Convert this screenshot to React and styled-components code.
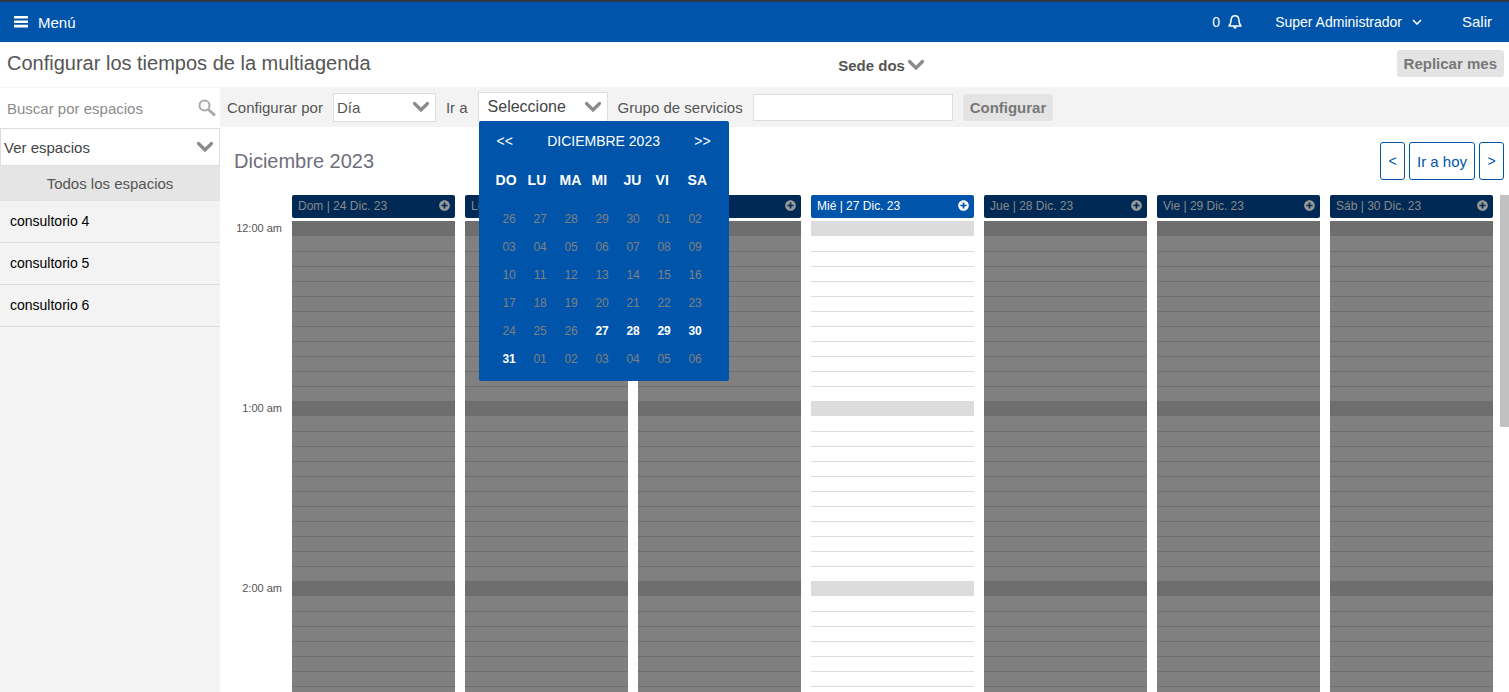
import { useState } from 'react';
import styled, { createGlobalStyle } from 'styled-components';
import { FaPlusCircle } from 'react-icons/fa';

const weekDays = ['DO', 'LU', 'MA', 'MI', 'JU', 'VI', 'SA'];

const monthDays = [
  '26', '27', '28', '29', '30', '01', '02',
  '03', '04', '05', '06', '07', '08', '09',
  '10', '11', '12', '13', '14', '15', '16',
  '17', '18', '19', '20', '21', '22', '23',
  '24', '25', '26', '27', '28', '29', '30',
  '31', '01', '02', '03', '04', '05', '06',
];

const firstAvailable = 31;
const lastAvailable = 35;

const agenda = [
  { label: 'Dom | 24 Dic. 23' },
  { label: 'Lun | 25 Dic. 23' },
  { label: 'Mar | 26 Dic. 23' },
  { label: 'Mié | 27 Dic. 23', active: true },
  { label: 'Jue | 28 Dic. 23' },
  { label: 'Vie | 29 Dic. 23' },
  { label: 'Sáb | 30 Dic. 23' },
];

const hours = ['12:00 am', '1:00 am', '2:00 am'];
const slots = Array.from({ length: 12 }, (_, i) => i);
const spaces = ['consultorio 4', 'consultorio 5', 'consultorio 6'];

const Arrow = () => (
  <ArrowIcon viewBox='0 0 18 12' aria-hidden='true'>
    <path d='M2.5 2.5 L9 9 L15.5 2.5' />
  </ArrowIcon>
);

const App = () => {
  const [search, setSearch] = useState('');
  const [group, setGroup] = useState('');

  return (
    <Page>
      <GlobalStyle />
      <TopBar>
        <MenuButton type='button'>
          <MenuIcon viewBox='0 0 14 12' aria-hidden='true'>
            <path d='M0 0h14v2.6H0z M0 4.4h14V7H0z M0 8.8h14v2.6H0z' />
          </MenuIcon>
          Menú
        </MenuButton>
        <TopActions>
          <Notifications type='button' aria-label='Notificaciones'>
            0
            <BellIcon viewBox='0 0 16 16' aria-hidden='true'>
              <path d='M8 1.8 C5.6 1.8 4.4 3.4 4.2 5.6 C4 8.8 3.4 10.3 2 12 H14 C12.6 10.3 12 8.8 11.8 5.6 C11.6 3.4 10.4 1.8 8 1.8 Z' />
              <path className='clapper' d='M6.2 12.6 H9.8 C9.8 15.4 6.2 15.4 6.2 12.6 Z' />
            </BellIcon>
          </Notifications>
          <UserButton type='button'>
            Super Administrador
            <SmallArrow viewBox='0 0 10 6' aria-hidden='true'>
              <path d='M1 1 L5 5 L9 1' />
            </SmallArrow>
          </UserButton>
          <ExitLink href='#salir'>Salir</ExitLink>
        </TopActions>
      </TopBar>

      <TitleBar>
        <Title>Configurar los tiempos de la multiagenda</Title>
        <SiteButton type='button'>
          Sede dos
          <Arrow />
        </SiteButton>
        <GrayButton type='button'>Replicar mes</GrayButton>
      </TitleBar>

      <Body>
        <Sidebar>
          <SearchBox>
            <input
              type='text'
              aria-label='Buscar por espacios'
              placeholder='Buscar por espacios'
              value={search}
              onChange={(e) => setSearch(e.target.value)}
            />
            <SearchIcon viewBox='0 0 18 18' aria-hidden='true'>
              <circle cx='6.5' cy='6.5' r='5' />
              <path d='M10.2 10.2 L12 12' />
              <path className='handle' d='M12 12 L16 15.6' />
            </SearchIcon>
          </SearchBox>
          <SpacesSelect>
            <select aria-label='Ver espacios'>
              <option>Ver espacios</option>
            </select>
            <Arrow />
          </SpacesSelect>
          <AllSpaces type='button'>Todos los espacios</AllSpaces>
          <SpaceList>
            {spaces.map((space) => <li key={space}>{space}</li>)}
          </SpaceList>
        </Sidebar>

        <Content>
          <Toolbar>
            <label htmlFor='mode'>Configurar por</label>
            <ModeSelect>
              <select id='mode'>
                <option>Día</option>
              </select>
              <Arrow />
            </ModeSelect>
            <span>Ir a</span>
            <DatePicker>
              <DateButton type='button' aria-expanded='true'>
                Seleccione
                <Arrow />
              </DateButton>
              <Calendar>
                <CalendarHeader>
                  <button type='button' aria-label='Mes anterior'>&lt;&lt;</button>
                  <span>DICIEMBRE 2023</span>
                  <button type='button' aria-label='Mes siguiente'>&gt;&gt;</button>
                </CalendarHeader>
                <WeekDays>
                  {weekDays.map((day) => <span key={day}>{day}</span>)}
                </WeekDays>
                <MonthDays>
                  {monthDays.map((day, i) => (
                    <DayButton
                      key={i}
                      type='button'
                      disabled={i < firstAvailable || i > lastAvailable}
                    >
                      {day}
                    </DayButton>
                  ))}
                </MonthDays>
              </Calendar>
            </DatePicker>
            <label htmlFor='group'>Grupo de servicios</label>
            <GroupInput
              id='group'
              type='text'
              value={group}
              onChange={(e) => setGroup(e.target.value)}
            />
            <GrayButton type='button'>Configurar</GrayButton>
          </Toolbar>

          <MonthBar>
            <MonthTitle>Diciembre 2023</MonthTitle>
            <MonthNav>
              <NavButton type='button' aria-label='Semana anterior'>&lt;</NavButton>
              <NavButton type='button' $large>Ir a hoy</NavButton>
              <NavButton type='button' aria-label='Semana siguiente'>&gt;</NavButton>
            </MonthNav>
          </MonthBar>

          <Agenda>
            <Hours>
              {hours.map((hour) => <Hour key={hour}>{hour}</Hour>)}
            </Hours>
            {agenda.map((day) => (
              <DayColumn key={day.label}>
                <DayHeader $active={day.active}>
                  {day.label}
                  <button type='button' aria-label={`Agregar ${day.label}`}>
                    <FaPlusCircle size={11} />
                  </button>
                </DayHeader>
                {hours.map((hour) => (
                  <HourBlock key={hour}>
                    {slots.map((slot) => <Slot key={slot} $active={day.active} />)}
                  </HourBlock>
                ))}
              </DayColumn>
            ))}
            <ScrollThumb />
          </Agenda>
        </Content>
      </Body>
    </Page>
  );
};

const GlobalStyle = createGlobalStyle`
  *{
    box-sizing: border-box;
  }

  body{
    margin: 0;
    background-color: #fff;
    color: #555;
    font-family: "Liberation Sans", Arial, sans-serif;
    font-size: 15px;
    overflow: hidden;
  }

  button, input, select{
    margin: 0;
    padding: 0;
    border: none;
    background: none;
    color: inherit;
    font: inherit;
  }

  button{
    cursor: pointer;
  }

  svg{
    flex-shrink: 0;
  }
`;

const Page = styled.div`
  height: 100vh;
  display: flex;
  flex-direction: column;
`;

const TopBar = styled.header`
  height: 42px;
  flex-shrink: 0;
  padding: 0 17px 0 14px;
  border-top: 2px solid #2f3645;
  background-color: #0055ab;
  color: #fff;
  display: flex;
  align-items: center;
  justify-content: space-between;
`;

const MenuButton = styled.button`
  display: flex;
  align-items: center;
  gap: 10px;
`;

const MenuIcon = styled.svg`
  width: 14px;
  height: 12px;
  fill: #fff;
`;

const TopActions = styled.div`
  padding-bottom: 1px;
  display: flex;
  align-items: center;
`;

const Notifications = styled.button`
  display: flex;
  align-items: center;
  gap: 7px;
  margin-right: 32px;
  font-size: 14px;
`;

const BellIcon = styled.svg`
  width: 16px;
  height: 16px;
  fill: none;
  stroke: #fff;
  stroke-width: 1.5;
  stroke-linejoin: round;

  .clapper{
    fill: #fff;
    stroke: none;
  }
`;

const UserButton = styled.button`
  display: flex;
  align-items: center;
  gap: 10px;
  margin-right: 40px;
  font-size: 14px;
`;

const SmallArrow = styled.svg`
  width: 10px;
  height: 6px;
  fill: none;
  stroke: #fff;
  stroke-width: 1.6;
`;

const ExitLink = styled.a`
  color: #fff;
  text-decoration: none;
`;

const ArrowIcon = styled.svg`
  width: 18px;
  height: 12px;
  fill: none;
  stroke: #8a8a8a;
  stroke-width: 3.2;
  stroke-linecap: round;
`;

const TitleBar = styled.div`
  height: 45px;
  flex-shrink: 0;
  padding: 0 5px 3px 7px;
  display: flex;
  align-items: center;
  justify-content: space-between;
`;

const Title = styled.h1`
  margin: 0;
  font-size: 20px;
  font-weight: 400;
  white-space: nowrap;
`;

const SiteButton = styled.button`
  padding: 4px 4px 0 0;
  display: flex;
  align-items: center;
  gap: 2px;
  font-weight: 700;
`;

const GrayButton = styled.button`
  height: 27px;
  padding: 0 7px;
  border-radius: 3px;
  background-color: #e4e4e4;
  color: #777;
  font-weight: 700;
  white-space: nowrap;
`;

const Body = styled.div`
  flex: 1;
  min-height: 0;
  display: flex;
`;

const Sidebar = styled.aside`
  width: 220px;
  flex-shrink: 0;
  background-color: #f3f3f3;
`;

const SearchBox = styled.div`
  height: 41px;
  padding: 0 4px 0 7px;
  border-top: 1px solid #f3f3f3;
  background-color: #fff;
  display: flex;
  align-items: center;

  input{
    flex: 1;
    min-width: 0;
    outline: none;
  }

  input::placeholder{
    color: #8c8c8c;
  }
`;

const SearchIcon = styled.svg`
  width: 18px;
  height: 18px;
  fill: none;
  stroke: #aaa;
  stroke-width: 2;

  .handle{
    stroke-width: 3;
    stroke-linecap: round;
  }
`;

const SelectBox = styled.div`
  position: relative;
  border: 1px solid #ddd;
  background-color: #fff;

  select{
    width: 100%;
    height: 100%;
    padding: 0 3px;
    appearance: none;
    outline: none;
  }

  svg{
    position: absolute;
    top: calc(50% - 6px);
    right: 5px;
    pointer-events: none;
  }
`;

const SpacesSelect = styled(SelectBox)`
  height: 38px;
  color: #444;
`;

const ModeSelect = styled(SelectBox)`
  width: 103px;
  height: 29px;
`;

const AllSpaces = styled.button`
  width: 100%;
  height: 35px;
  background-color: #e5e5e5;
`;

const SpaceList = styled.ul`
  margin: 0;
  padding: 0;
  list-style: none;
  color: #000;
  font-size: 14px;

  li{
    padding: 0 10px;
    border-bottom: 1px solid #ddd;
    line-height: 41px;
  }
`;

const Content = styled.main`
  flex: 1;
  min-width: 0;
  display: flex;
  flex-direction: column;
`;

const Toolbar = styled.div`
  height: 40px;
  flex-shrink: 0;
  padding: 0 7px;
  background-color: #f3f3f3;
  display: flex;
  align-items: center;
  gap: 10px;
  white-space: nowrap;
`;

const DatePicker = styled.div`
  position: relative;
`;

const DateButton = styled.button`
  width: 130px;
  height: 30px;
  padding: 0 5px 0 9px;
  border: 1px solid #ddd;
  background-color: #fff;
  color: #444;
  font-size: 16px;
  display: flex;
  align-items: center;
  justify-content: space-between;
`;

const Calendar = styled.div`
  position: absolute;
  top: 29px;
  left: 1px;
  z-index: 1;
  width: 250px;
  height: 260px;
  border-radius: 2px;
  background-color: #0055ab;
  color: #fff;
  font-size: 14px;
`;

const CalendarHeader = styled.div`
  height: 40px;
  padding: 0 18px;
  display: flex;
  align-items: center;
  justify-content: space-between;
`;

const WeekDays = styled.div`
  height: 38px;
  padding-left: 17px;
  display: grid;
  grid-template-columns: repeat(7, 32px);
  align-items: center;
  font-weight: 700;
`;

const MonthDays = styled.div`
  padding: 6px 15px;
  display: grid;
  grid-template-columns: repeat(7, 31px);
  grid-auto-rows: 28px;
`;

const DayButton = styled.button`
  font-size: 12px;
  font-weight: 700;

  &:disabled{
    color: #808080;
    font-weight: 400;
    cursor: default;
  }
`;

const GroupInput = styled.input`
  width: 200px;
  height: 27px;
  padding: 0 5px;
  border: 1px solid #ddd;
  background-color: #fff;
`;

const MonthBar = styled.div`
  height: 68px;
  flex-shrink: 0;
  padding: 0 5px 0 14px;
  display: flex;
  align-items: center;
  justify-content: space-between;
`;

const MonthTitle = styled.h2`
  margin: 0;
  color: #6f6f7b;
  font-size: 20px;
  font-weight: 400;
`;

const MonthNav = styled.div`
  display: flex;
  gap: 4px;
`;

const NavButton = styled.button`
  width: ${({ $large }) => ($large ? '66px' : '25px')};
  height: 38px;
  border: 1px solid #0055ab;
  border-radius: 3px;
  color: #0055ab;
  font-size: ${({ $large }) => ($large ? '15px' : '14px')};
`;

const Agenda = styled.div`
  position: relative;
  flex: 1;
  min-height: 0;
  padding-right: 16px;
  overflow: hidden;
  display: flex;
  align-items: flex-start;
  gap: 10px;
`;

const Hours = styled.div`
  width: 62px;
  flex-shrink: 0;
  padding-top: 26px;
  font-size: 11px;
  line-height: 15px;
  text-align: right;
`;

const Hour = styled.div`
  height: 180px;
`;

const DayColumn = styled.div`
  flex: 1;
  min-width: 0;
`;

const DayHeader = styled.div`
  height: 23px;
  margin-bottom: 3px;
  padding: 0 5px 2px 6px;
  border-radius: 2px;
  background-color: ${({ $active }) => ($active ? '#0055ab' : '#002a55')};
  color: ${({ $active }) => ($active ? '#fff' : '#8a8a8a')};
  font-size: 12px;
  white-space: nowrap;
  display: flex;
  align-items: center;
  justify-content: space-between;

  button{
    display: flex;
    color: ${({ $active }) => ($active ? '#fff' : '#999')};
  }
`;

const HourBlock = styled.div`
  height: 180px;
`;

const Slot = styled.div`
  height: 15px;
  border-top: 1px solid ${({ $active }) => ($active ? '#dcdcdc' : '#6e6e6e')};
  background-color: ${({ $active }) => ($active ? '#fff' : '#808080')};

  &:first-child{
    background-color: ${({ $active }) => ($active ? '#dcdcdc' : '#6e6e6e')};
  }

  &:nth-child(2){
    border-top: none;
  }
`;

const ScrollThumb = styled.div`
  position: absolute;
  top: 0;
  right: 0;
  width: 9px;
  height: 232px;
  background-color: #c1c1c1;
`;

export default App;
